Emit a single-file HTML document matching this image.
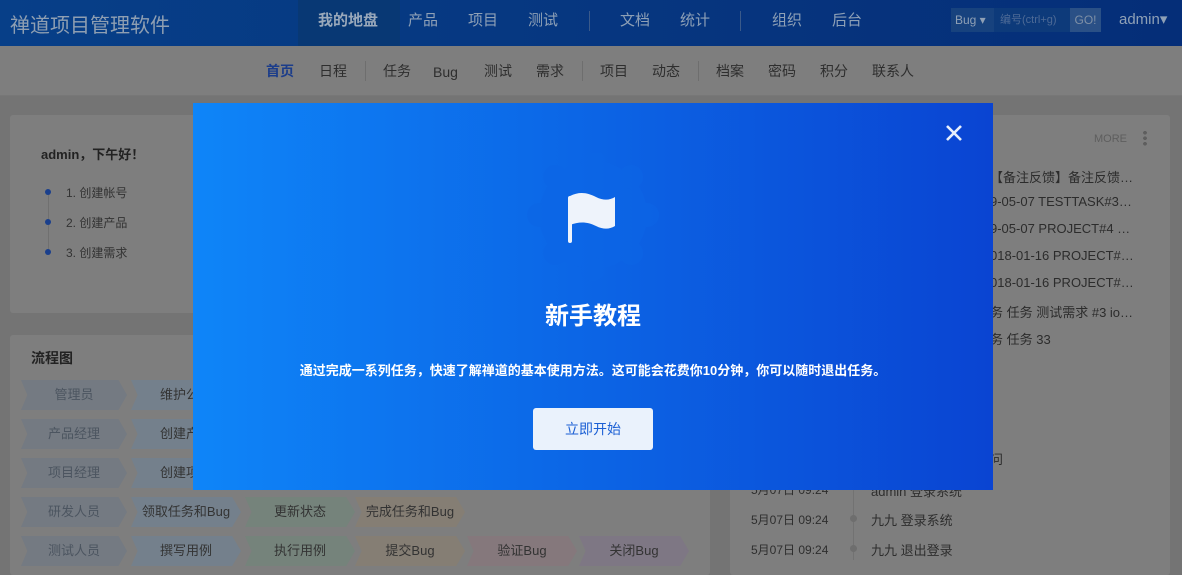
<!DOCTYPE html>
<html><head><meta charset="utf-8">
<style>
*{margin:0;padding:0;box-sizing:border-box}
body{width:1182px;height:556px;overflow:hidden;position:relative;background:#747474;font-family:"Liberation Sans","Noto Sans CJK SC",sans-serif;font-size:13px;color:#2a2a2a}
.hdr{position:absolute;left:0;top:0;width:1182px;height:46px;background:linear-gradient(90deg,#073f88,#052e78)}
.logo{position:absolute;left:10px;top:9px;font-size:20px;color:#8f9fb2}
.nav{position:absolute;top:0;height:46px;line-height:42px;font-size:15px;color:#8ea0b6}
.sub{position:absolute;left:0;top:46px;width:1182px;height:50px;background:#7e7e7e;border-bottom:1px solid #777}
.sn{position:absolute;top:62px;font-size:14px;color:#2e2e2e;line-height:18px}
.sep{position:absolute;width:1px;background:#6e6e6e}
.panel{position:absolute;background:#7e7e7e;border-radius:3px}
.chev{position:absolute;height:30px;line-height:30px;text-align:center;font-size:13px;clip-path:polygon(0 0,92% 0,100% 50%,92% 100%,0 100%,6% 50%)}
.modal{position:absolute;left:193px;top:103px;width:800px;height:387px;background:linear-gradient(90deg,#0e85f8,#0a44d2)}
.rl{position:absolute;left:990px;font-size:13px;color:#2c2c2c;white-space:nowrap}
</style></head><body>
<div class="hdr"></div>
<div class="logo">禅道项目管理软件</div>
<div style="position:absolute;left:298px;top:0;width:102px;height:46px;background:#083874"></div>
<div class="nav" style="left:318px;font-weight:bold;color:#9aa9bb">我的地盘</div>
<div class="nav" style="left:408px">产品</div>
<div class="nav" style="left:468px">项目</div>
<div class="nav" style="left:528px">测试</div>
<div class="sep" style="left:589px;top:11px;height:20px;background:#3a5a8a"></div>
<div class="nav" style="left:620px">文档</div>
<div class="nav" style="left:680px">统计</div>
<div class="sep" style="left:740px;top:11px;height:20px;background:#3a5a8a"></div>
<div class="nav" style="left:772px">组织</div>
<div class="nav" style="left:832px">后台</div>
<div style="position:absolute;left:951px;top:8px;width:43px;height:24px;background:#17427e;color:#8fa0b5;font-size:12px;line-height:24px;padding-left:4px">Bug ▾</div>
<div style="position:absolute;left:994px;top:8px;width:76px;height:24px;background:#0d3a7a;color:#4d6a96;font-size:11px;line-height:24px;padding-left:6px">编号(ctrl+g)</div>
<div style="position:absolute;left:1070px;top:8px;width:31px;height:24px;background:#2a5086;color:#7f90a6;font-size:12px;line-height:24px;text-align:center">GO!</div>
<div class="nav" style="left:1119px;top:-1px;font-size:15px">admin▾</div>
<div class="sub"></div>
<div class="sn" style="left:266px;color:#1c3d8a;font-weight:bold">首页</div>
<div class="sn" style="left:319px">日程</div>
<div class="sep" style="left:365px;top:61px;height:20px"></div>
<div class="sn" style="left:383px">任务</div>
<div class="sn" style="left:433px;top:63px">Bug</div>
<div class="sn" style="left:484px">测试</div>
<div class="sn" style="left:536px">需求</div>
<div class="sep" style="left:582px;top:61px;height:20px"></div>
<div class="sn" style="left:600px">项目</div>
<div class="sn" style="left:652px">动态</div>
<div class="sep" style="left:698px;top:61px;height:20px"></div>
<div class="sn" style="left:716px">档案</div>
<div class="sn" style="left:768px">密码</div>
<div class="sn" style="left:820px">积分</div>
<div class="sn" style="left:872px">联系人</div>

<div class="panel" style="left:10px;top:115px;width:700px;height:198px"></div>
<div style="position:absolute;left:41px;top:144px;font-size:13px;font-weight:bold;color:#222">admin，下午好！</div>
<div style="position:absolute;left:48px;top:192px;width:1px;height:60px;background:#707070"></div>
<div style="position:absolute;left:45px;top:189px;width:6px;height:6px;border-radius:50%;background:#1a3f8c"></div>
<div style="position:absolute;left:45px;top:219px;width:6px;height:6px;border-radius:50%;background:#1a3f8c"></div>
<div style="position:absolute;left:45px;top:249px;width:6px;height:6px;border-radius:50%;background:#1a3f8c"></div>
<div style="position:absolute;left:66px;top:184px;font-size:12px;color:#333">1. 创建帐号</div>
<div style="position:absolute;left:66px;top:214px;font-size:12px;color:#333">2. 创建产品</div>
<div style="position:absolute;left:66px;top:244px;font-size:12px;color:#333">3. 创建需求</div>

<div class="panel" style="left:10px;top:335px;width:700px;height:240px"></div>
<div style="position:absolute;left:31px;top:348px;font-size:14px;font-weight:bold;color:#222">流程图</div>
<div class="chev" style="left:21px;top:380px;width:106px;background:#747a82;color:#4c5560">管理员</div>
<div class="chev" style="left:131px;top:380px;width:110px;background:#74808c;color:#333">维护公司</div>
<div class="chev" style="left:21px;top:419px;width:106px;background:#747a82;color:#4c5560">产品经理</div>
<div class="chev" style="left:131px;top:419px;width:110px;background:#74808c;color:#333">创建产品</div>
<div class="chev" style="left:21px;top:458px;width:106px;background:#747a82;color:#4c5560">项目经理</div>
<div class="chev" style="left:131px;top:458px;width:110px;background:#74808c;color:#333">创建项目</div>
<div class="chev" style="left:21px;top:497px;width:106px;background:#747a82;color:#4c5560">研发人员</div>
<div class="chev" style="left:131px;top:497px;width:110px;background:#74808c;color:#333">领取任务和Bug</div>
<div class="chev" style="left:245px;top:497px;width:110px;background:#75837b;color:#333">更新状态</div>
<div class="chev" style="left:355px;top:497px;width:110px;background:#857e74;color:#333">完成任务和Bug</div>
<div class="chev" style="left:21px;top:536px;width:106px;background:#747a82;color:#4c5560">测试人员</div>
<div class="chev" style="left:131px;top:536px;width:110px;background:#74808c;color:#333">撰写用例</div>
<div class="chev" style="left:245px;top:536px;width:110px;background:#75837b;color:#333">执行用例</div>
<div class="chev" style="left:355px;top:536px;width:110px;background:#857e74;color:#333">提交Bug</div>
<div class="chev" style="left:467px;top:536px;width:110px;background:#85787c;color:#333">验证Bug</div>
<div class="chev" style="left:579px;top:536px;width:110px;background:#7e7784;color:#333">关闭Bug</div>

<div class="panel" style="left:730px;top:115px;width:440px;height:460px"></div>
<div style="position:absolute;left:1094px;top:133px;font-size:11px;color:#5e5e5e">MORE</div>
<div style="position:absolute;left:1143px;top:130px;width:4px;height:16px;background:radial-gradient(circle,#5e5e5e 1.8px,transparent 2px) 0 0/4px 5.5px"></div>
<div class="rl" style="top:167px">【备注反馈】备注反馈…</div>
<div class="rl" style="top:194px">9-05-07 TESTTASK#3…</div>
<div class="rl" style="top:221px">9-05-07 PROJECT#4 …</div>
<div class="rl" style="top:248px">018-01-16 PROJECT#…</div>
<div class="rl" style="top:275px">018-01-16 PROJECT#…</div>
<div class="rl" style="top:302px">务 任务 测试需求 #3 io…</div>
<div class="rl" style="top:329px">务 任务 33</div>
<div class="rl" style="top:449px">问</div>
<div style="position:absolute;left:853px;top:480px;width:1px;height:80px;background:#727272"></div>
<div style="position:absolute;left:751px;top:481px;font-size:12px;color:#2e2e2e">5月07日 09:24</div>
<div style="position:absolute;left:871px;top:481px;font-size:13px;color:#2e2e2e">admin 登录系统</div>
<div style="position:absolute;left:751px;top:511px;font-size:12px;color:#2e2e2e">5月07日 09:24</div>
<div style="position:absolute;left:850px;top:515px;width:7px;height:7px;border-radius:50%;background:#6e6e6e"></div>
<div style="position:absolute;left:871px;top:510px;font-size:13px;color:#2e2e2e">九九 登录系统</div>
<div style="position:absolute;left:751px;top:541px;font-size:12px;color:#2e2e2e">5月07日 09:24</div>
<div style="position:absolute;left:850px;top:545px;width:7px;height:7px;border-radius:50%;background:#6e6e6e"></div>
<div style="position:absolute;left:871px;top:540px;font-size:13px;color:#2e2e2e">九九 退出登录</div>

<div class="modal">
<svg style="position:absolute;left:325px;top:50px" width="150" height="130" viewBox="0 0 150 130">
<g fill="#0d66e6" opacity=".55">
<circle cx="75" cy="62" r="54"/>
<circle cx="75" cy="8" r="12"/><circle cx="75" cy="116" r="12"/>
<circle cx="21" cy="62" r="12"/><circle cx="129" cy="62" r="12"/>
<circle cx="37" cy="24" r="12"/><circle cx="113" cy="24" r="12"/>
<circle cx="37" cy="100" r="12"/><circle cx="113" cy="100" r="12"/>
</g>
<path d="M52 45 L52 88" stroke="#eef3fb" stroke-width="4" stroke-linecap="round"/>
<path d="M52 43 C62 38 70 40 78 44 C86 48 92 47 97 44 L97 73 C92 76 86 77 78 73 C70 69 62 68 52 72 Z" fill="#eef3fb"/>
</svg>
<div style="position:absolute;left:0;width:800px;top:199px;text-align:center;font-size:24px;font-weight:bold;color:#fff;line-height:30px">新手教程</div>
<div style="position:absolute;left:0;width:800px;top:257px;text-align:center;font-size:13px;font-weight:bold;color:#fff">通过完成一系列任务，快速了解禅道的基本使用方法。这可能会花费你10分钟，你可以随时退出任务。</div>
<div style="position:absolute;left:340px;top:305px;width:120px;height:42px;background:#eaf2fc;border-radius:3px;color:#1a5fd4;font-size:14px;line-height:42px;text-align:center">立即开始</div>
<svg style="position:absolute;left:751px;top:20px" width="20" height="20" viewBox="0 0 20 20"><path d="M3 3L17 17M17 3L3 17" stroke="#e8f0fc" stroke-width="2.6"/></svg>
</div>
</body></html>
